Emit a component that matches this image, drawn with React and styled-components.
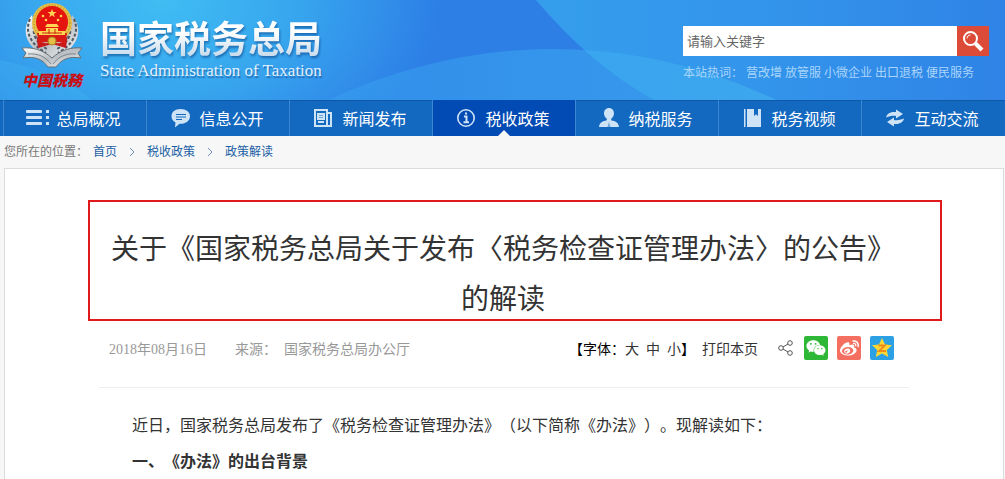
import React from 'react';
import styled, { createGlobalStyle, css } from 'styled-components';
import { FaWeixin, FaWeibo } from 'react-icons/fa';

const GlobalStyle = createGlobalStyle`
  * {
    box-sizing: border-box;
  }
  body {
    margin: 0;
    background-color: #f7f7f7;
    font-family: 'Liberation Sans', 'Noto Sans CJK SC', sans-serif;
    font-size: 12px;
    text-spacing-trim: space-all;
  }
  a {
    color: inherit;
    text-decoration: none;
  }
`;

const Header = styled.header`
  position: relative;
  display: flex;
  justify-content: space-between;
  height: 100px;
  padding: 0 16px 0 20px;
  overflow: hidden;
  background: radial-gradient(280px 190px at 160px 0, #40bdf3 0%, #37a5ee 50%, #2d7fe6 100%);
`;

const Waves = styled.svg`
  position: absolute;
  inset: 0;
  width: 100%;
  height: 100%;
`;

const Brand = styled.a`
  position: relative;
  display: flex;
  gap: 16px;
`;

const Emblem = styled.div`
  display: flex;
  flex-direction: column;
  align-items: center;
  width: 64px;
  padding-top: 2px;
`;

const EmblemText = styled.span`
  color: #c80f14;
  font-family: 'Noto Sans CJK SC', sans-serif;
  font-size: 15px;
  font-style: italic;
  font-weight: 900;
  line-height: 20px;
  white-space: nowrap;
`;

const BrandText = styled.div`
  display: flex;
  flex-direction: column;
  padding-top: 20px;
`;

const BrandName = styled.span`
  background: linear-gradient(#ffffff 30%, #c9dcec 85%);
  background-clip: text;
  color: transparent;
  filter: drop-shadow(1px 2px 1px rgba(10, 60, 130, 0.55));
  font-size: 37px;
  font-weight: 700;
  line-height: 42px;
`;

const BrandSub = styled.span`
  color: #e3f1fc;
  font-family: 'Liberation Serif', serif;
  font-size: 17px;
  line-height: 18px;
  text-shadow: 1px 2px 1px rgba(10, 60, 130, 0.5);
`;

const SearchArea = styled.div`
  position: relative;
  width: 306px;
  padding-top: 26px;
`;

const SearchForm = styled.form`
  display: flex;
  height: 30px;
`;

const SearchInput = styled.input`
  flex: 1;
  min-width: 0;
  padding: 0 4px;
  border: 0;
  background-color: #fff;
  font-family: inherit;
  font-size: 13px;

  &::placeholder {
    color: #666;
    opacity: 1;
  }
`;

const SearchButton = styled.button`
  display: flex;
  align-items: center;
  justify-content: center;
  width: 32px;
  padding: 0;
  border: 0;
  background-color: #dc4a38;
`;

const HotWords = styled.div`
  display: flex;
  gap: 3px;
  margin-top: 8px;
  color: #a9d5fa;
  line-height: 18px;
  white-space: nowrap;
`;

const Nav = styled.nav`
  display: flex;
  height: 36px;
  padding: 0 1px 0 3px;
  background-color: #1368c0;
  box-shadow: inset 0 1px 0 #0e58a8;
`;

const NavItem = styled.a`
  position: relative;
  display: flex;
  flex: 1;
  align-items: center;
  justify-content: center;
  gap: 7px;
  padding-right: 4px;
  border-left: 1px solid #3a87d3;
  color: #fff;
  font-size: 16px;
  line-height: 36px;
  white-space: nowrap;

  svg {
    flex: none;
    color: #cfe3f7;
  }

  ${({ $active }) =>
    $active &&
    css`
      background-color: #034bb4;

      &::after {
        content: '';
        position: absolute;
        bottom: 0;
        left: 50%;
        margin-left: -6px;
        border: 6px solid transparent;
        border-top: 0;
        border-bottom-color: #f7f7f7;
      }
    `}
`;

const NavLabel = styled.span`
  padding-top: 4px;
`;

const Breadcrumb = styled.nav`
  display: flex;
  align-items: center;
  height: 32px;
  padding-left: 4px;
  color: #777;
  line-height: 30px;
`;

const Crumb = styled.a`
  margin-left: 5px;
  color: #1b5fa5;
`;

const Arrow = styled.svg`
  margin: 0 7px 0 12px;
`;

const Article = styled.main`
  margin: 0 1px 0 4px;
  padding: 31px 61px 0 83px;
  border: 1px solid #dcdcdc;
  border-bottom: 0;
  background-color: #fff;
`;

const TitleBox = styled.div`
  padding: 23px 32px 0 8px;
  border: 2px solid #e01a1a;
`;

const Title = styled.h1`
  height: 94px;
  margin: 0;
  color: #333;
  font-size: 28px;
  font-weight: 400;
  line-height: 50px;
  text-align: center;
`;

const Meta = styled.div`
  display: flex;
  align-items: center;
  justify-content: space-between;
  height: 67px;
  margin: 0 33px 0 11px;
  padding: 0 15px 12px 10px;
  border-bottom: 1px solid #eee;
  font-family: 'Liberation Serif', 'Noto Sans CJK SC', sans-serif;
  font-size: 14px;
  line-height: 28px;
  white-space: nowrap;
`;

const Source = styled.div`
  display: flex;
  align-items: center;
  gap: 28px;
  padding-top: 4px;
  color: #999;

  span + span {
    margin-left: 7px;
  }
`;

const Tools = styled.div`
  display: flex;
  align-items: center;
  color: #333;
`;

const TextTools = styled.div`
  display: flex;
  gap: 7px;
  padding-top: 4px;
`;

const FontSize = styled.div`
  display: flex;
  color: #000;
`;

const TextButton = styled.button`
  padding: 0;
  border: 0;
  background: none;
  color: #333;
  font: inherit;
`;

const Sizes = styled.div`
  display: flex;
  gap: 7px;
`;

const Share = styled.div`
  display: flex;
  align-items: center;
  gap: 9px;
  margin-left: 19px;
`;

const ShareLink = styled.a`
  display: flex;
  align-items: center;
  justify-content: center;
  width: 24px;
  height: 24px;
  border-radius: 2px;
  background-color: ${({ $color }) => $color};
  color: #fff;
`;

const Body = styled.div`
  margin: 0 33px 0 12px;
  padding-top: 20px;
  color: #333;
  font-size: 16px;
  line-height: 36px;
`;

const Paragraph = styled.p`
  margin: 0;
  text-indent: 2em;
`;

const SubHeading = styled.h2`
  height: 35px;
  margin: 0;
  font-size: inherit;
  font-weight: 700;
  text-indent: 2em;
`;

const icons = {
  list: (
    <g fill="currentColor">
      <rect x="1" y="2" width="16" height="3" rx="1" />
      <rect x="1" y="8" width="16" height="3" rx="1" />
      <rect x="1" y="14" width="16" height="3" rx="1" />
      <rect x="21" y="2" width="3" height="3" />
      <rect x="21" y="8" width="3" height="3" />
      <rect x="21" y="14" width="3" height="3" />
    </g>
  ),
  chat: (
    <g>
      <path d="M12.500 1C7 1 3.500 4 3.500 8.300c0 3 1.500 4.900 4 6.200L7 19.500l4.500-3.700c6 .4 10.500-2.800 10.500-7.500C22 4 18 1 12.500 1z" fill="currentColor" />
      <path d="M8 6.500h10M8 9h10M8 11.500h6" stroke="#1368c0" strokeWidth="1.200" />
    </g>
  ),
  news: (
    <g fill="none" stroke="currentColor" strokeWidth="2">
      <path d="M4 2h12v16H4zM16 5h4v13H4" />
      <path d="M7 6h6v5H7zM7 14h6" />
      <path d="M8 8.500h4" />
    </g>
  ),
  info: (
    <g fill="none" stroke="currentColor">
      <circle cx="12" cy="10" r="8.200" strokeWidth="1.600" />
      <path d="M10 8.500h2.500V14M9.500 14.200h5.500" strokeWidth="2" />
      <path d="M11 5.500h2" strokeWidth="2" />
    </g>
  ),
  user: (
    <g fill="currentColor">
      <path d="M12 0c3 0 5 2.300 5 5.200 0 2.500-1.300 4.500-2.800 5.600v1.400c4 1 7.300 2 7.800 6.800H2c.5-4.800 3.800-5.800 7.800-6.800v-1.400C8.300 9.700 7 7.700 7 5.200 7 2.300 9 0 12 0z" />
      <path d="M12 14l1.500 5h-3z" fill="#1368c0" opacity=".5" />
    </g>
  ),
  book: (
    <g fill="currentColor">
      <path d="M4 1h1.500v18H4zM7 1h7v7l2-1.800L18 8V1h3v18H7z" />
    </g>
  ),
  exchange: (
    <g fill="currentColor">
      <path d="M3 9.500C4 5 8.500 3.500 13 4V1.500L20 6l-7 4.500V8C9.500 7.500 7 8 3 9.500z" />
      <path d="M21 10.500C20 15 15.500 16.500 11 16v2.500L4 14l7-4.500V12c3.500.5 6 0 10-1.500z" />
    </g>
  ),
};

const menu = [
  { label: '总局概况', icon: 'list' },
  { label: '信息公开', icon: 'chat' },
  { label: '新闻发布', icon: 'news' },
  { label: '税收政策', icon: 'info', active: true },
  { label: '纳税服务', icon: 'user' },
  { label: '税务视频', icon: 'book' },
  { label: '互动交流', icon: 'exchange' },
];

const hotWords = ['营改增', '放管服', '小微企业', '出口退税', '便民服务'];

const crumbs = ['首页', '税收政策', '政策解读'];

const HeaderWaves = () => (
  <Waves viewBox="0 0 1005 100" preserveAspectRatio="none" aria-hidden="true">
    <defs>
      <linearGradient id="right" x1="0" x2="1">
        <stop offset="0" stopColor="#359eec" />
        <stop offset="0.5" stopColor="#3394eb" />
        <stop offset="1" stopColor="#2f83e6" />
      </linearGradient>
      <linearGradient id="hill" x1="0" x2="1">
        <stop offset="0" stopColor="#3aaaf2" stopOpacity="0.35" />
        <stop offset="1" stopColor="#45b8f2" stopOpacity="0.5" />
      </linearGradient>
    </defs>
    <path d="M536 0Q592 66 654 100H1005V0z" fill="url(#right)" />
    <path d="M328 100Q440 49 552 49Q670 49 776 100z" fill="url(#hill)" />
    <path d="M0 60Q60 72 92 100H0z" fill="#45c0f5" opacity="0.25" />
  </Waves>
);

const EmblemIcon = () => (
  <svg width="64" height="68" viewBox="0 0 64 68" aria-hidden="true">
    <defs>
      <linearGradient id="silver" x1="0" y1="0" x2="1" y2="1">
        <stop offset="0" stopColor="#ffffff" />
        <stop offset="0.5" stopColor="#b9bec2" />
        <stop offset="1" stopColor="#f4f4f4" />
      </linearGradient>
    </defs>
    <path d="M12 13C2 24 3 42 22 52L32 56L42 52C61 42 62 24 52 13L47 38H17z" fill="url(#silver)" />
    <g fill="none" stroke="#4c5963" strokeWidth="2" strokeDasharray="3 2">
      <path d="M10 17C4 31 12 43 26 51" />
      <path d="M54 17C60 31 52 43 38 51" />
      <path d="M14 24C12 34 18 42 27 47" />
      <path d="M50 24C52 34 46 42 37 47" />
    </g>
    <path d="M2 46C13 45 23 48 32 56C41 48 51 45 62 46L58 51L61 56C49 54 42 57 36 65H28C22 57 15 54 3 56L6 51z" fill="url(#silver)" stroke="#647078" strokeWidth="1" />
    <path d="M8 52C18 51 26 55 31 62M56 52C46 51 38 55 33 62" fill="none" stroke="#79858d" />
    <path d="M16 30C18 43 27 42 32 40C37 42 46 43 48 30L46 46L32 42L18 46z" fill="#c91a1b" />
    <circle cx="32" cy="21" r="20" fill="#e6bd45" />
    <circle cx="32" cy="21" r="18" fill="none" stroke="#a98524" strokeDasharray="1 2" />
    <circle cx="32" cy="20" r="16" fill="#e5140f" />
    <path d="M17 31H47L45 42Q38 38 32 42Q26 38 19 42z" fill="#d81a14" />
    <g fill="#ffd653">
      <path d="M32 7l1.200 3h3.300l-2.700 2 1 3.200-2.800-2-2.800 2 1-3.200-2.700-2h3.300z" />
      <circle cx="23" cy="14" r="1.300" />
      <circle cx="26" cy="18" r="1.300" />
      <circle cx="38" cy="18" r="1.300" />
      <circle cx="41" cy="14" r="1.300" />
      <path d="M27 22h10l2 3H25zM26 26h12v3h7v4H19v-4h7z" />
    </g>
    <path d="M22 31h20M29 27v5M35 27v5" stroke="#c7240f" />
    <circle cx="32" cy="39" r="4" fill="#e6bd45" stroke="#a98524" />
  </svg>
);

const App = () => {
  return (
    <>
      <GlobalStyle />
      <Header>
        <HeaderWaves />
        <Brand href="#">
          <Emblem>
            <EmblemIcon />
            <EmblemText>中国税務</EmblemText>
          </Emblem>
          <BrandText>
            <BrandName>国家税务总局</BrandName>
            <BrandSub>State Administration of Taxation</BrandSub>
          </BrandText>
        </Brand>
        <SearchArea>
          <SearchForm>
            <SearchInput type="text" aria-label="请输入关键字" placeholder="请输入关键字" />
            <SearchButton type="button" aria-label="搜索">
              <svg width="22" height="22" viewBox="0 0 22 22" fill="none" stroke="#fff">
                <circle cx="8.500" cy="8.500" r="6.500" strokeWidth="2" />
                <path d="M13.500 13.500L20 20" strokeWidth="4" />
                <path d="M5 8.500C5 6.500 6.500 5 8.500 5" strokeWidth="1" />
              </svg>
            </SearchButton>
          </SearchForm>
          <HotWords>
            <span>本站热词：</span>
            {hotWords.map((word) => (
              <a href="#" key={word}>{word}</a>
            ))}
          </HotWords>
        </SearchArea>
      </Header>
      <Nav>
        {menu.map(({ label, icon, active }) => (
          <NavItem href="#" key={label} $active={active}>
            <svg width="24" height="20" viewBox="0 0 24 20" aria-hidden="true">{icons[icon]}</svg>
            <NavLabel>{label}</NavLabel>
          </NavItem>
        ))}
      </Nav>
      <Breadcrumb>
        <span>您所在的位置：</span>
        {crumbs.map((crumb, i) => (
          <React.Fragment key={crumb}>
            {i > 0 && (
              <Arrow width="6" height="10" viewBox="0 0 6 10" fill="none" stroke="#6f93bd">
                <path d="M1 1l4 4-4 4" />
              </Arrow>
            )}
            <Crumb href="#">{crumb}</Crumb>
          </React.Fragment>
        ))}
      </Breadcrumb>
      <Article>
        <TitleBox>
          <Title>关于《国家税务总局关于发布〈税务检查证管理办法〉的公告》的解读</Title>
        </TitleBox>
        <Meta>
          <Source>
            <span>2018年08月16日</span>
            <div>
              <span>来源：</span>
              <span>国家税务总局办公厅</span>
            </div>
          </Source>
          <Tools>
            <TextTools>
              <FontSize>
                <span>【字体：</span>
                <Sizes>
                  <TextButton>大</TextButton>
                  <TextButton>中</TextButton>
                  <TextButton>小</TextButton>
                </Sizes>
                <span>】</span>
              </FontSize>
              <TextButton>打印本页</TextButton>
            </TextTools>
            <Share>
              <svg width="18" height="16" viewBox="0 0 18 16" fill="none" stroke="#555" aria-hidden="true">
                <circle cx="4" cy="8" r="2.300" />
                <circle cx="13" cy="3" r="2.300" />
                <circle cx="13" cy="13" r="2.300" />
                <path d="M6 7l5-3M6 9l5 3" />
              </svg>
              <ShareLink href="#" $color="#2fb837" aria-label="微信">
                <FaWeixin size={20} />
              </ShareLink>
              <ShareLink href="#" $color="#f56f61" aria-label="微博">
                <FaWeibo size={19} />
              </ShareLink>
              <ShareLink href="#" $color="#2ba0e4" aria-label="QQ空间">
                <svg width="22" height="22" viewBox="0 0 22 22">
                  <path d="M11 1l3 6.500 7 .8-5.200 4.800 1.400 7L11 16.600 4.800 20.100l1.400-7L1 8.300l7-.8z" fill="#fdd835" />
                  <path d="M7.500 8.500h6.500l-6 5.500h7" fill="none" stroke="#ec8a1c" strokeWidth="1.800" />
                </svg>
              </ShareLink>
            </Share>
          </Tools>
        </Meta>
        <Body>
          <Paragraph>近日，国家税务总局发布了《税务检查证管理办法》（以下简称《办法》）。现解读如下：</Paragraph>
          <SubHeading>一、《办法》的出台背景</SubHeading>
        </Body>
      </Article>
    </>
  );
};

export default App;
